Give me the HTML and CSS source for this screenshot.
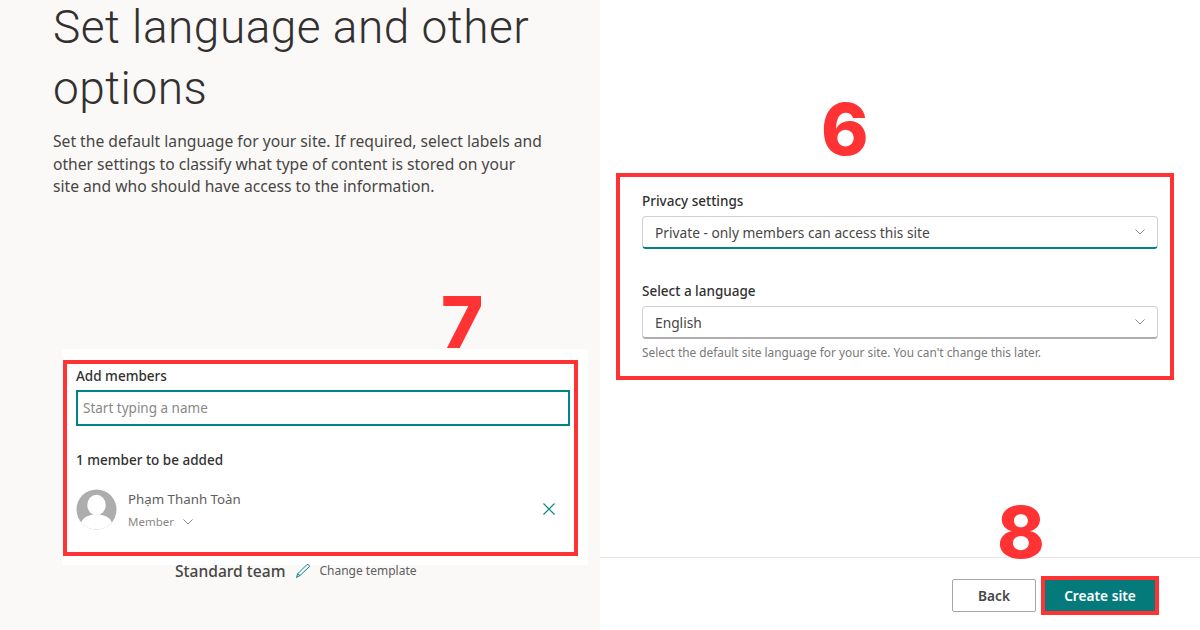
FILE: index.html
```html
<!DOCTYPE html>
<html lang="en">
<head>
  <meta charset="UTF-8">
  <title>Create site</title>
  <meta name="viewport" content="width=device-width, initial-scale=1.0">
  <link rel="stylesheet" href="styles.css">
</head>
<body>
  <div class="page">
    <div class="left">
      <h1><span class="line-one">Set language and other</span> <span class="line-two">options</span></h1>
      <p class="intro">Set the default language for your site. If required, select labels and other settings to classify what type of content is stored on your site and who should have access to the information.</p>

      <div class="step step-7">7</div>
      <div class="card">
        <div class="red-box members">
          <div class="label">Add members</div>
          <div class="name-input">Start typing a name</div>
          <div class="label count">1 member to be added</div>
          <div class="person">
            <svg class="avatar" viewBox="0 0 40 40" width="41" height="41">
              <defs><clipPath id="round"><circle cx="20" cy="20" r="19.5"/></clipPath></defs>
              <circle cx="20" cy="20" r="19.5" fill="#adadad"/>
              <g clip-path="url(#round)" fill="#fff">
                <ellipse cx="20" cy="15.5" rx="9" ry="10"/>
                <path d="M4 36c1-7 6-10 12-11h8c6 1 11 4 12 11v6H4z"/>
              </g>
            </svg>
            <div class="person-text">
              <div class="person-name">Phạm Thanh Toàn</div>
              <div class="person-role">Member
                <svg class="chev" viewBox="0 0 10 6" width="10" height="6"><path d="M.5.5 5 5 9.500.5" fill="none" stroke="#8a8886"/></svg>
              </div>
            </div>
            <svg class="remove" viewBox="0 0 12 12" width="12" height="12"><path d="M.5.5l11 11M11.500.5l-11 11" fill="none" stroke="#038387" stroke-width="1.100"/></svg>
          </div>
        </div>
      </div>
      <div class="template">
        <span class="template-name">Standard team</span>
        <svg viewBox="0 0 16 16" width="16" height="16"><path d="M1.500 14.500 2.500 11 12 1.500c1.200-.4 2.500.8 2.500 2L5 12.500zM2.500 11 5 12.500" fill="none" stroke="#038387" stroke-width="1"/></svg>
        <span class="template-link">Change template</span>
      </div>
    </div>

    <div class="right">
      <div class="step step-6">6</div>
      <div class="red-box options">
        <div class="label">Privacy settings</div>
        <div class="select active">Private - only members can access this site
          <svg viewBox="0 0 10 6" width="10" height="6"><path d="M.5.5 5 5 9.500.5" fill="none" stroke="#8a8886"/></svg>
        </div>
        <div class="label lang">Select a language</div>
        <div class="select">English
          <svg viewBox="0 0 10 6" width="10" height="6"><path d="M.5.5 5 5 9.500.5" fill="none" stroke="#8a8886"/></svg>
        </div>
        <div class="help">Select the default site language for your site. You can't change this later.</div>
      </div>
      <div class="step step-8">8</div>
      <div class="footer">
        <button class="back">Back</button>
        <div class="create-box"><button class="create">Create site</button></div>
      </div>
    </div>
  </div>
</body>
</html>
```

FILE: styles.css
```css
* {
  box-sizing: border-box;
}

body {
  margin: 0;
  font-family: 'Noto Sans', sans-serif;
  background: white;
  color: #323130;
}

.page {
  display: grid;
  grid-template-columns: 600px 600px;
  width: 1200px;
  height: 630px;
  overflow: hidden;
}

.left {
  background: #faf9f8;
  height: 630px;
  padding-left: 53px;
}

h1 {
  margin: 0;
  width: 500px;
  font-family: Roboto, sans-serif;
  font-size: 46px;
  font-weight: 300;
  letter-spacing: 0.5px;
}

h1 span {
  display: block;
}

.line-one {
  line-height: 54px;
}

.line-two {
  line-height: 69px;
}

.intro {
  margin: 7px 0 0;
  width: 492px;
  font-size: 15.650px;
  line-height: 22.500px;
  color: #484644;
}

.step {
  font-family: Inter, sans-serif;
  font-size: 72px;
  font-weight: 800;
  line-height: 70px;
  color: #ff3333;
}

.step-7 {
  margin: 89px 0 0 388px;
  height: 62px;
}

.step-6 {
  margin-left: 221px;
  padding-top: 94px;
  height: 173px;
}

.step-8 {
  margin: 117px 0 0 397px;
  height: 60px;
}

.card {
  margin-left: 9px;
  width: 526px;
  height: 216px;
  background: white;
  padding-top: 11px;
}

.red-box {
  border: 4px solid #ff3333;
}

.members {
  width: 515px;
  height: 196px;
  margin-left: 1px;
  padding: 3px 4px 0 9px;
}

.label {
  font-size: 13.500px;
  font-weight: 500;
  line-height: 18px;
  color: #323130;
}

.name-input {
  margin-top: 5px;
  height: 36px;
  border: 2px solid #038387;
  padding-left: 5px;
  font-size: 13.500px;
  line-height: 32px;
  color: #8a8886;
}

.count {
  margin-top: 25px;
}

.person {
  display: flex;
  align-items: center;
  margin-top: 20px;
}

.person-text {
  margin-left: 11px;
}

.person-name {
  font-size: 13.300px;
  line-height: 20px;
  color: #605e5c;
}

.person-role {
  display: flex;
  align-items: center;
  gap: 9px;
  margin-top: 5px;
  font-size: 11.500px;
  line-height: 16px;
  color: #8a8886;
}

.remove {
  margin-left: auto;
  margin-right: 15px;
}

.template {
  display: flex;
  align-items: center;
  margin: -4px 0 0 122px;
  height: 20px;
}

.template-name {
  font-size: 15.600px;
  font-weight: 500;
  color: #484644;
}

.template svg {
  margin: 0 8px 0 10px;
}

.template-link {
  font-size: 12px;
  color: #605e5c;
}

.right {
  height: 630px;
  background: white;
}

.options {
  width: 558px;
  height: 207px;
  margin-left: 16px;
  padding: 15px 12px 0 22px;
}

.select {
  display: flex;
  align-items: center;
  justify-content: space-between;
  height: 33px;
  margin-top: 6px;
  padding: 0 12px;
  border: 1px solid #d2d0ce;
  border-bottom: 2px solid #b0aeac;
  border-radius: 4px;
  font-size: 13.750px;
  color: #484644;
}

.select.active {
  border-bottom-color: #038387;
}

.lang {
  margin-top: 33px;
}

.help {
  margin-top: 5px;
  font-size: 11.850px;
  line-height: 16px;
  color: #7a7876;
}

.footer {
  display: flex;
  align-items: center;
  justify-content: flex-end;
  height: 73px;
  margin-top: 0;
  padding: 3px 41px 0 0;
  border-top: 1px solid #e8e6e4;
}

.back {
  width: 84px;
  height: 33px;
  margin-right: 5px;
  border: 1px solid #a8a6a4;
  border-radius: 2px;
  background: white;
  font: 600 13.700px 'Noto Sans', sans-serif;
  color: #484644;
}

.create-box {
  border: 4px solid #ff3333;
}

.create {
  display: block;
  width: 110px;
  height: 31px;
  border: none;
  background: #047a7a;
  font: 600 13.700px 'Noto Sans', sans-serif;
  color: white;
}
```
